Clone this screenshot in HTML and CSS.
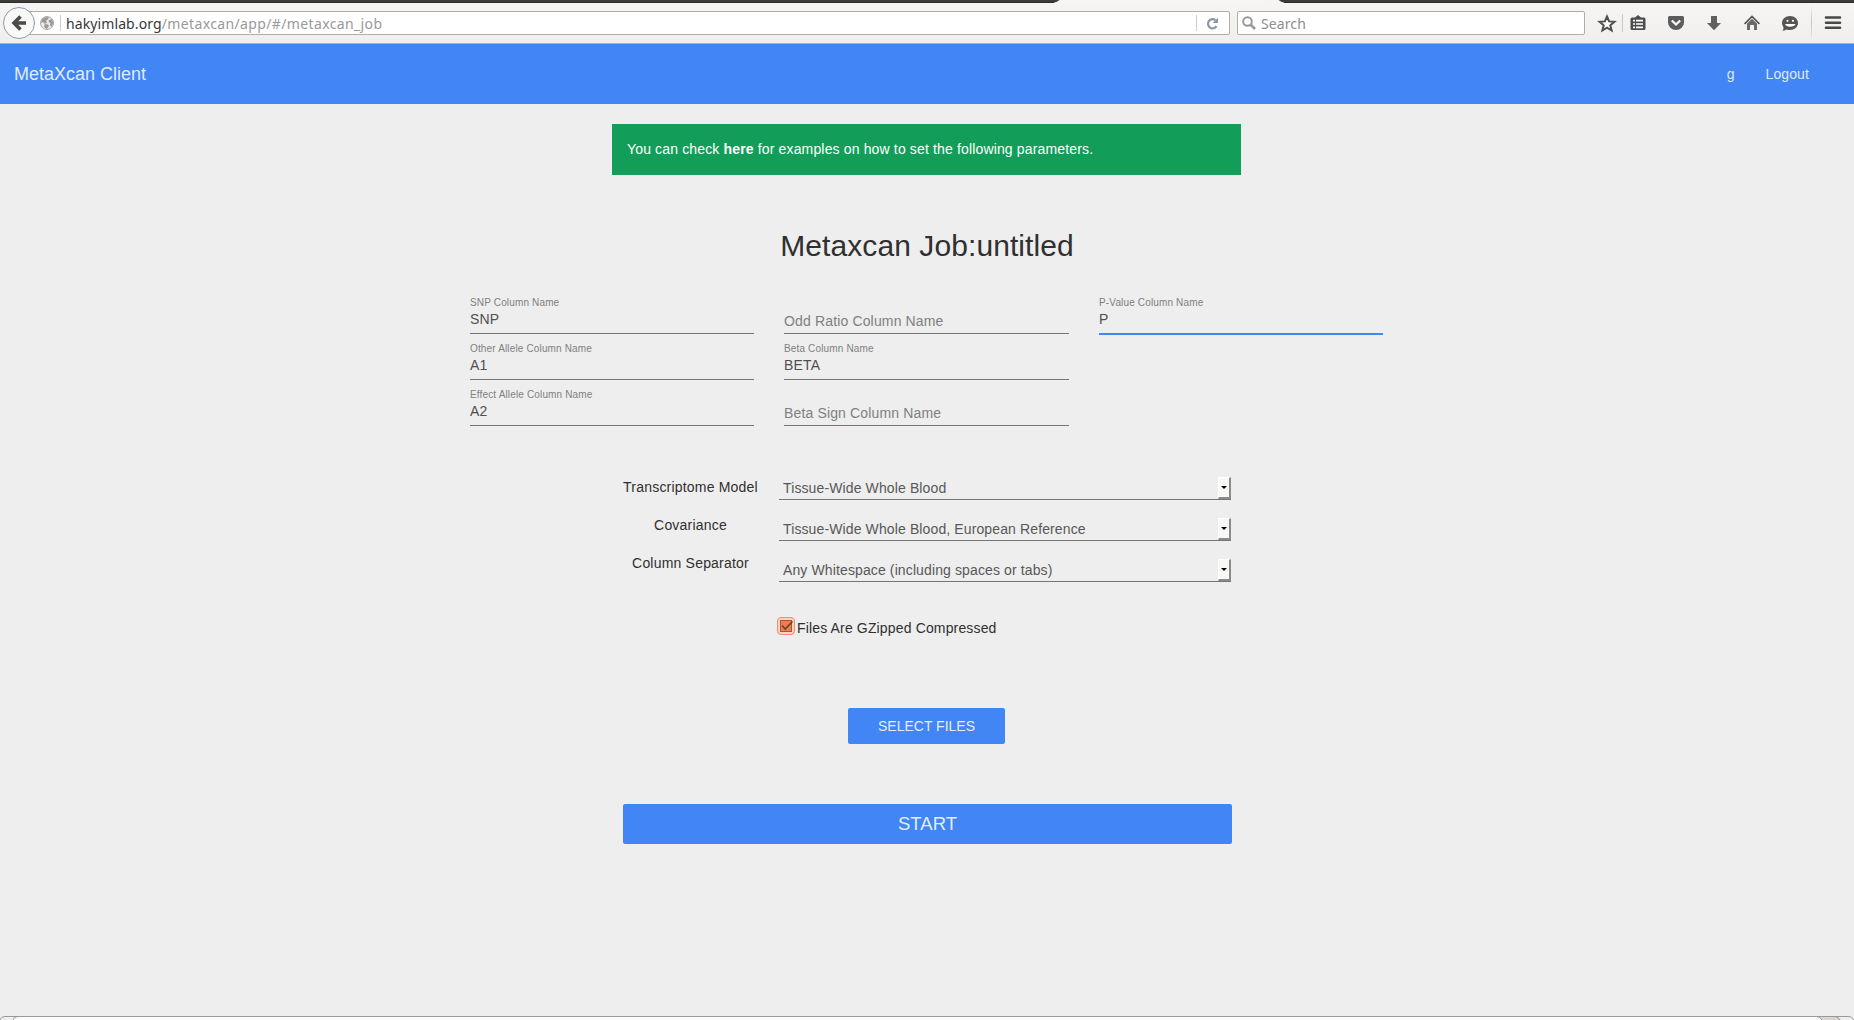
FILE: index.html
```html
<!DOCTYPE html>
<html lang="en">
<head>
<meta charset="utf-8">
<title>MetaXcan Client</title>
<link rel="stylesheet" href="styles.css">
</head>
<body>
<div class="chrome">
  <div class="tabstrip"><svg width="1854" height="3"><path d="M0 0H1854V3H1286Q1281 2.5 1278.500 0H1059.500Q1057 2.500 1052 3H0Z" fill="#3c3b37"/><path d="M0 2.500H1054M1284 2.500H1854" stroke="#2c2b28"/></svg></div>
  <div class="toolbar">
    <svg class="back" width="34" height="34" viewBox="0 0 34 34"><circle cx="17" cy="17" r="15.500" fill="#f9f9f8" stroke="#8e9ba9"/><path d="M18.500 10.500L12 17l6.500 6.500M12.500 17H24" fill="none" stroke="#4b4b4b" stroke-width="3.600"/></svg>
    <div class="urlbar">
      <svg class="globe" width="14" height="14" viewBox="0 0 14 14"><circle cx="7" cy="7" r="6.500" fill="#e9e9e9" stroke="#aaa"/><path d="M2 3L6 1l3 .5-1 2-2 1 1 2-2 1.500-2-2-2 1ZM5 8l3 .5 1 1.500-2 3-2-1-1-2ZM9 4l3-1 1.500 4-2 4-1.500-2 .5-2-2-1Z" fill="#999"/></svg>
      <span class="rule"></span>
      <span class="url"><span class="host">hakyimlab.org</span><span class="path">/metaxcan/app/#/metaxcan_job</span></span>
      <span class="rule reload-rule"></span>
      <svg class="reload" width="13" height="13" viewBox="0 0 13 13"><path d="M10.500 9.200A4.600 4.600 0 1 1 9.500 3.200" fill="none" stroke="#8b98a3" stroke-width="2.200"/><path d="M12 .8V6H6.600Z" fill="#8b98a3"/></svg>
    </div>
    <div class="search">
      <svg width="14" height="15" viewBox="0 0 14 15"><circle cx="5.500" cy="5.500" r="4.300" fill="none" stroke="#999" stroke-width="2"/><path d="M8.500 8.500L13 13" stroke="#999" stroke-width="2.600"/></svg>
      <span class="hint">Search</span>
    </div>
    <svg class="tools" width="260" height="40" viewBox="1594 3 260 40">
      <defs><linearGradient id="v" x1="0" y1="0" x2="0" y2="1"><stop offset="0" stop-color="#bbb" stop-opacity="0"/><stop offset=".5" stop-color="#c8c8c8"/><stop offset="1" stop-color="#bbb" stop-opacity="0"/></linearGradient></defs>
      <path d="M1607 16.500l2.100 4.900 5.300.4-4.100 3.500 1.300 5.200-4.600-2.800-4.600 2.800 1.300-5.200-4.100-3.500 5.300-.4Z" fill="#fff" stroke="#505050" stroke-width="2"/>
      <path d="M1622.500 14V32" stroke="#c9c9c9"/>
      <path d="M1632 17.500h3l3-2.500 3 2.500h3q1.500 0 1.500 1.500v9.500q0 1.500-1.500 1.500h-12q-1.500 0-1.500-1.500V19q0-1.500 1.500-1.500Z" fill="#4d4d4d"/><path d="M1633 20.700h2M1636 20.700h7M1633 24h2M1636 24h7M1633 27.300h2M1636 27.300h7" stroke="#fff" stroke-width="1.700"/>
      <path d="M1669.500 16h13q1.500 0 1.500 1.500v5a8 7.500 0 0 1-16 0v-5q0-1.500 1.500-1.500Z" fill="#5c5c5c"/><path d="M1671.800 20.500l4.200 4 4.200-4" fill="none" stroke="#f6f6f6" stroke-width="2.300"/>
      <path d="M1711 16h6v7h4l-7 7.300-7-7.300h4Z" fill="#606060"/>
      <path d="M1744.500 24l7.500-7.500 7.500 7.500" fill="none" stroke="#505050" stroke-width="1.600"/><path d="M1747 23.500l5-4.800 5 4.800V30h-3v-5h-4v5h-3Z" fill="#6a6a6a"/>
      <path d="M1790 16c4.500 0 8 3 8 7s-3.500 7-8 7q-2 0-3.500-.6-2 1.300-4 1.300 1.200-1.300 1-3.200-1.500-2-1.500-4.500c0-4 3.500-7 8-7Z" fill="#555"/><circle cx="1787.500" cy="20.800" r="1.100" fill="#fff"/><circle cx="1793" cy="20.800" r="1.100" fill="#fff"/><path d="M1785 24h10.500q-1 2.700-5.200 2.700t-5.300-2.700Z" fill="#fff"/>
      <rect x="1811" y="5" width="1" height="36" fill="url(#v)"/>
      <path d="M1826 17.500h14M1826 22.700h14M1826 27.700h14" stroke="#484848" stroke-width="2.600" stroke-linecap="round"/>
    </svg>
  </div>
</div>
<header class="appbar">
  <span class="brand">MetaXcan Client</span>
  <nav class="nav"><span>g</span><span>Logout</span></nav>
</header>
<main class="page">
  <div class="notice">You can check <b>here</b> for examples on how to set the following parameters.</div>
  <h1 class="title">Metaxcan Job:untitled</h1>
  <div class="fields">
    <div class="field"><span class="caption">SNP Column Name</span><span class="value">SNP</span></div>
    <div class="field empty"><span class="placeholder">Odd Ratio Column Name</span></div>
    <div class="field focused"><span class="caption">P-Value Column Name</span><span class="value">P</span></div>
    <div class="field start"><span class="caption">Other Allele Column Name</span><span class="value">A1</span></div>
    <div class="field"><span class="caption">Beta Column Name</span><span class="value">BETA</span></div>
    <div class="field start"><span class="caption">Effect Allele Column Name</span><span class="value">A2</span></div>
    <div class="field empty"><span class="placeholder">Beta Sign Column Name</span></div>
  </div>
  <div class="options">
    <div class="labels"><span>Transcriptome Model</span><span>Covariance</span><span>Column Separator</span></div>
    <div class="selects">
      <div class="select"><span>Tissue-Wide Whole Blood</span><i class="drop"></i></div>
      <div class="select"><span>Tissue-Wide Whole Blood, European Reference</span><i class="drop"></i></div>
      <div class="select"><span>Any Whitespace (including spaces or tabs)</span><i class="drop"></i></div>
    </div>
  </div>
  <div class="check">
    <svg width="18" height="18" viewBox="0 0 18 18"><rect x=".5" y=".5" width="17" height="17" rx="3.500" fill="#f9d3c4" stroke="#ef8e69"/><rect x="3" y="3" width="12" height="12" fill="#ee7d51"/><rect x="3.500" y="3.500" width="11" height="11" fill="none" stroke="#5a3324" stroke-dasharray="1 1"/><path d="M5 8.500l3.200 3.500L15.500 4.500" fill="none" stroke="#74402b" stroke-width="1.700"/></svg>
    <span>Files Are GZipped Compressed</span>
  </div>
  <button class="btn select-files">SELECT FILES</button>
  <button class="btn start-job">START</button>
</main>
<footer class="edge"><svg width="1854" height="4"><path d="M0 4Q1 .5 5 .5H1849Q1852 .5 1854 4Z" fill="#f0efed"/><path d="M1819 0h18l4 4h-18Z" fill="#d8d5d1"/><path d="M13 4Q14 .5 18 .5H1817Q1820 .5 1822 4Z" fill="#fbfbfb"/><path d="M0 4Q1 .5 5 .5H1849Q1852 .5 1854 4M13 4Q14 .5 18 .5M1817 .5Q1820 .5 1822 4M1835 .5q3 0 5 3.500" fill="none" stroke="#999"/></svg></footer>
</body>
</html>
```
FILE: styles.css
```css
* { box-sizing: border-box; }

body {
  margin: 0;
  height: 1020px;
  display: flex;
  flex-direction: column;
  overflow: hidden;
  background: #eee;
  font: 14px/20px "Liberation Sans", Arial, sans-serif;
  letter-spacing: .15px;
  color: #303030;
}

svg { display: block; flex: none; }

/* Browser toolbar */
.chrome {
  height: 44px;
  border-bottom: 1px solid #b2b0aa;
  background: linear-gradient(#f6f5f4, #f0efed);
}
.tabstrip { height: 3px; }
.toolbar {
  display: flex;
  height: 40px;
  padding-left: 2px;
  font: 14px/22px "Noto Sans", sans-serif;
  letter-spacing: .1px;
}
.back { margin-top: 3px; z-index: 1; }
.urlbar, .search {
  display: flex;
  align-items: center;
  height: 24px;
  margin-top: 8px;
  background: #fff;
  border: 1px solid #b0aea5;
  border-radius: 2px;
}
.urlbar {
  width: 1205px;
  margin-left: -11px;
  padding-left: 14px;
  border-radius: 0 2px 2px 0;
}
.rule { width: 1px; height: 16px; margin-left: 6px; background: #ccc; }
.url { margin-left: 5px; padding-top: 1px; white-space: nowrap; }
.hint { padding-top: 1px; }
.host { color: #383838; }
.path { color: #999; letter-spacing: .37px; }
.reload-rule { margin-left: auto; }
.reload { margin: 0 10px 0 9px; }
.search {
  width: 348px;
  margin-left: 7px;
  padding-left: 4px;
  gap: 5px;
  color: #8e8e8e;
}
.tools { margin-left: 9px; }

/* Application bar */
.appbar {
  display: flex;
  justify-content: space-between;
  height: 60px;
  padding: 20px 45px 0 14px;
  background: #4286f5;
  color: rgba(255, 255, 255, .85);
}
.brand { font-size: 18px; letter-spacing: 0; line-height: 20px; }
.nav { display: flex; gap: 31px; letter-spacing: .1px; }

/* Job form */
.page { flex: 1; }
.notice {
  width: 629px;
  height: 51px;
  margin: 20px 0 0 612px;
  padding: 15px;
  background: #129e58;
  color: #fff;
}
.title {
  margin: 53px 0 0;
  font-size: 30px;
  font-weight: 400;
  line-height: 36px;
  letter-spacing: .08px;
  text-align: center;
}
.fields {
  display: grid;
  grid-template-columns: 284px 285px 284px;
  grid-auto-rows: 46px;
  column-gap: 30px;
  margin: 24px 0 0 470px;
}
.field {
  display: flex;
  flex-direction: column;
  padding-top: 9px;
  border-bottom: 1px solid #757575;
}
.field.start { grid-column: 1; }
.field.empty { padding-top: 23px; }
.field.focused { border-color: #4286f5; box-shadow: 0 1px #4286f5; }
.caption { font-size: 10px; line-height: 12px; color: #808080; }
.value { color: #505050; }
.placeholder { color: #808080; }

.options {
  display: flex;
  gap: 21px;
  margin: 51px 0 0 623px;
}
.labels {
  display: flex;
  flex-direction: column;
  gap: 18px;
  width: 135px;
  text-align: center;
  white-space: nowrap;
  letter-spacing: .2px;
}
.selects {
  display: flex;
  flex-direction: column;
  gap: 18px;
  width: 452px;
  letter-spacing: .12px;
}
.select {
  display: flex;
  justify-content: space-between;
  height: 23px;
  padding-left: 4px;
  border-bottom: 1px solid #757575;
  color: #585858;
}
.select span { padding-top: 1px; }
.drop {
  display: flex;
  align-items: center;
  justify-content: center;
  width: 13px;
  height: 22px;
  border: solid;
  border-width: 1px 2px 2px 1px;
  border-color: #fff #8b8b8b #8b8b8b #fff;
  background: #f8f8f7;
}
.drop::after {
  content: "";
  border: solid transparent;
  border-width: 3px 3px 0;
  border-top-color: #000;
}
.check {
  display: flex;
  gap: 2px;
  margin: 35px 0 0 777px;
}
.check span { padding-top: 1px; }
.btn {
  display: block;
  padding: 0;
  border: 0;
  border-radius: 2px;
  background: #4286f5;
  color: rgba(255, 255, 255, .87);
  font: 14px/20px "Liberation Sans", Arial, sans-serif;
}
.select-files { width: 157px; height: 36px; margin: 70px 0 0 848px; }
.start-job { width: 609px; height: 40px; margin: 60px 0 0 623px; font-size: 18.5px; }

.edge { height: 4px; }
```
